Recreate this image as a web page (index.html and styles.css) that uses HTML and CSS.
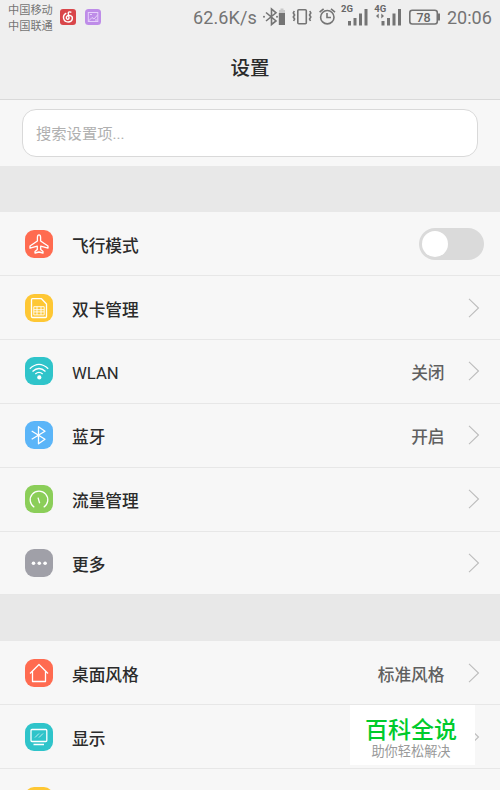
FILE: index.html
```
<!DOCTYPE html>
<html lang="zh-CN">
<head>
<meta charset="utf-8">
<title>设置</title>
<link rel="stylesheet" href="styles.css">
</head>
<body>
<div class="screen">
  <header class="header">
    <div class="status">
      <div class="carriers"><span>中国移动</span><span>中国联通</span></div>
      <svg class="app" width="16" height="16" viewBox="0 0 16 16"><rect width="16" height="16" rx="3" fill="#d9464a"/><path d="M10.8 3.2C9 2.4 8 3.3 8.3 4.8L9 8.7C9.3 10.6 6.5 10.9 6.3 9C6.1 7 8 6 10 6.4C13.7 7.4 13 13 8.2 13C3.3 13 1.8 7 5.8 4.4" fill="none" stroke="#fff" stroke-width="1.4" stroke-linecap="round"/></svg>
      <svg class="app second" width="16" height="16" viewBox="0 0 16 16"><rect width="16" height="16" rx="3.5" fill="#be8ce8"/><g fill="none" stroke="#e6d0fa"><rect x="3.3" y="3.5" width="9.5" height="9"/><path d="M3.5 12L7 8.5L9 10L12.5 6M5 5.5h2M10 11h2"/></g></svg>
      <span class="speed">62.6K/s</span>
      <svg class="status-icons" width="178" height="28" viewBox="262 3 178 28">
        <g fill="none" stroke="#747474" stroke-width="1.6">
          <path d="M266 12.5L276 21L271.5 24.5V9L276 12.8L266 21"/>
          <rect x="297.8" y="9.8" width="8.5" height="14" rx="1"/>
          <path d="M294.3 11l-1 2 1.3 2-1.3 2 1.3 2-1 2M309.8 11l1 2-1.3 2 1.3 2-1.3 2 1 2"/>
          <circle cx="327.3" cy="17.2" r="6.7"/><path d="M327 13v4.5h4M319.6 12.2l4-3.4M335 12.2l-4-3.4"/>
          <rect x="409.8" y="10.3" width="27.5" height="13.7" rx="2.5"/>
        </g>
        <g fill="#747474">
          <circle cx="264" cy="16.8" r="1"/><circle cx="277" cy="16.8" r="1"/>
          <path d="M278.8 13h6.2v12h-6.2z"/><path d="M279 10h6v3h-6zM280.5 8.5h3v1.5h-3z" fill="#c9c9c9"/>
          <path d="M348 21h3v4.5h-3zM353.5 18h3v7.5h-3zM359 13.5h3v12h-3zM364.5 9h3v16.5h-3z"/>
          <path d="M381.5 21h3v4.5h-3zM387 18h3v7.5h-3zM392.5 13.5h3v12h-3zM398 9h3v16.5h-3z"/>
          <path d="M376 16l2.7-2.5v5zM384 16l-2.7-2.5v5zM438 13.5h2v7h-2z"/>
        </g>
        <g class="tiny"><text x="341" y="12">2G</text><text x="374.3" y="12">4G</text></g>
        <text class="charge" x="416.5" y="21.8">78</text>
      </svg>
      <span class="clock">20:06</span>
    </div>
    <h1>设置</h1>
  </header>
  <div class="search"><div class="field">搜索设置项...</div></div>
  <section class="group">
    <div class="row"><svg class="icon red" viewBox="0 0 28 28"><path d="M14 4.8C12.8 4.8 12.4 6.2 12.4 7.5V11L5 16V18.2L12.3 16.2V19.5L10 21.5V23L14 22L18 23V21.5L15.7 19.5V16.2L23 18.2V16L15.6 11V7.5C15.6 6.2 15.2 4.8 14 4.8Z"/></svg><span class="label">飞行模式</span><span class="toggle"></span></div>
    <div class="row"><svg class="icon yellow" viewBox="0 0 28 28"><path d="M7.5 4.7H16.5L21.5 10V22.5Q21.5 23.5 20.5 23.5H7.5Q6.5 23.5 6.5 22.5V5.7Q6.5 4.7 7.5 4.7Z"/><path stroke-width=".9" d="M8.8 12.7h10.4v8.2H8.8zM8.8 15.7h3.2v2.2H8.8M19.2 15.7H16v2.2h3.2M12 15.7h4M12 17.9h4M12 12.7v3M16 12.7v3M12 17.9v3M16 17.9v3"/></svg><span class="label">双卡管理</span><svg class="arrow" viewBox="0 0 12 20"><path d="M1 .8L10.5 10L1 19.2"/></svg></div>
    <div class="row"><svg class="icon teal" viewBox="0 0 28 28"><path d="M4.8 11.8Q14 3 23.2 11.8M7.5 14.5Q14 8.5 20.5 14.5M10.3 17Q14 13.7 17.7 17"/><circle class="solid" cx="14.3" cy="20.4" r="2.1"/></svg><span class="label latin">WLAN</span><span class="value">关闭</span><svg class="arrow" viewBox="0 0 12 20"><path d="M1 .8L10.5 10L1 19.2"/></svg></div>
    <div class="row"><svg class="icon blue" viewBox="0 0 28 28"><path d="M6.7 10L20 18.2L13.5 22.8V5.7L20 10.3L6.7 18.2"/></svg><span class="label">蓝牙</span><span class="value">开启</span><svg class="arrow" viewBox="0 0 12 20"><path d="M1 .8L10.5 10L1 19.2"/></svg></div>
    <div class="row"><svg class="icon green" viewBox="0 0 28 28"><path d="M9.3 22.3A8.8 8.8 0 1 1 18.7 22.3M13 12.6L14.7 18.2"/></svg><span class="label">流量管理</span><svg class="arrow" viewBox="0 0 12 20"><path d="M1 .8L10.5 10L1 19.2"/></svg></div>
    <div class="row"><svg class="icon gray" viewBox="0 0 28 28"><g class="solid"><circle cx="8.5" cy="14.3" r="1.8"/><circle cx="14.3" cy="14.3" r="1.8"/><circle cx="20.1" cy="14.3" r="1.8"/></g></svg><span class="label">更多</span><svg class="arrow" viewBox="0 0 12 20"><path d="M1 .8L10.5 10L1 19.2"/></svg></div>
  </section>
  <section class="group">
    <div class="row"><svg class="icon red" viewBox="0 0 28 28"><path d="M5 14.5L14 5.5L23 14.5M7.5 12.5V22.5H20.5V12.5"/></svg><span class="label">桌面风格</span><span class="value">标准风格</span><svg class="arrow" viewBox="0 0 12 20"><path d="M1 .8L10.5 10L1 19.2"/></svg></div>
    <div class="row"><svg class="icon teal" viewBox="0 0 28 28"><rect x="6" y="6.5" width="15.8" height="12" rx="1"/><path d="M8.5 21.5H19"/><path stroke-width=".7" d="M10 14.5L14 10.5M14 14.5L18 10.5"/></svg><span class="label">显示</span><svg class="arrow" viewBox="0 0 12 20"><path d="M1 .8L10.5 10L1 19.2"/></svg></div>
    <div class="row"><svg class="icon yellow" viewBox="0 0 28 28"></svg></div>
  </section>
  <div class="badge"><strong>百科全说</strong><span>助你轻松解决</span></div>
</div>
</body>
</html>
```

FILE: styles.css
```
* { box-sizing: border-box; }
body { margin: 0; font-family: Roboto, "Noto Sans CJK SC", sans-serif; color: #2b2b2b; }
.screen { position: relative; width: 500px; height: 790px; overflow: hidden; background: #e8e8e8; }
.header { height: 100px; background: #efefef; border-bottom: 1px solid #d9d9d9; }
.status { display: flex; align-items: center; height: 34px; padding-left: 8px; color: #747474; }
.carriers { display: flex; flex-direction: column; width: 52px; padding-top: 3px; font-size: 11.2px; line-height: 16px; white-space: nowrap; }
.app { flex: none; }
.second { margin-left: 9px; }
.speed { width: 69px; margin-left: 92px; font-size: 18px; white-space: nowrap; letter-spacing: .1px; }
.status-icons { flex: none; }
.tiny { font: 700 9.5px Roboto, sans-serif; fill: #666; }
.charge { font: 500 12.5px Roboto, sans-serif; fill: #666; }
.clock { margin-left: 7px; font-size: 18px; }
h1 { margin: 21px 0 0; text-align: center; font-size: 19.5px; line-height: 28px; font-weight: 500; }
.search { height: 66px; padding: 9px 22px; background: #f7f7f7; }
.field { height: 48px; padding-left: 13px; border: 1px solid #d9d9d9; border-radius: 14px; background: #fff; color: #b0b0b0; font-size: 15.3px; line-height: 49px; }
.group { margin-top: 46.3px; background: #f7f7f7; }
.group + .group { margin-top: 46.1px; }
.row { display: flex; align-items: center; height: 63.85px; padding: 0 20px 0 25px; border-bottom: 1px solid #e7e7e7; }
.icon { flex: none; width: 28px; height: 28px; margin-right: 19px; border-radius: 9px; fill: none; stroke: #fff; stroke-width: 1.3; stroke-linejoin: round; }
.solid { fill: #fff; stroke: none; }
.red { background: #ff6b50; }
.yellow { background: #fec734; }
.teal { background: #2fc4ca; }
.blue { background: #5bb5f8; }
.green { background: #8bce59; }
.gray { background: #a0a0a8; }
.label, .value { font-size: 16.7px; line-height: 26px; font-weight: 500; padding-top: 6px; }
.label { flex: 1; }
.latin { padding-top: 5px; font-weight: 400; }
.value { margin-right: 23.5px; color: #606060; }
.arrow { flex: none; width: 12px; height: 20px; fill: none; stroke: #bcbcbc; stroke-width: 1.1; }
.toggle { width: 65px; height: 32px; margin-right: -4px; padding: 3px; border-radius: 16px; background: #dadada; }
.toggle::before { content: ""; display: block; width: 26px; height: 26px; border-radius: 50%; background: #fff; }
.badge { position: absolute; left: 350px; top: 705px; width: 125px; height: 60px; padding: 11px 3px 0 0; background: #fff; text-align: center; }
.badge strong, .badge span { display: block; white-space: nowrap; }
.badge strong { color: #00cb2c; font-size: 23px; line-height: 30px; font-weight: 500; }
.badge span { color: #999; font-size: 13.2px; line-height: 12px; }
```
